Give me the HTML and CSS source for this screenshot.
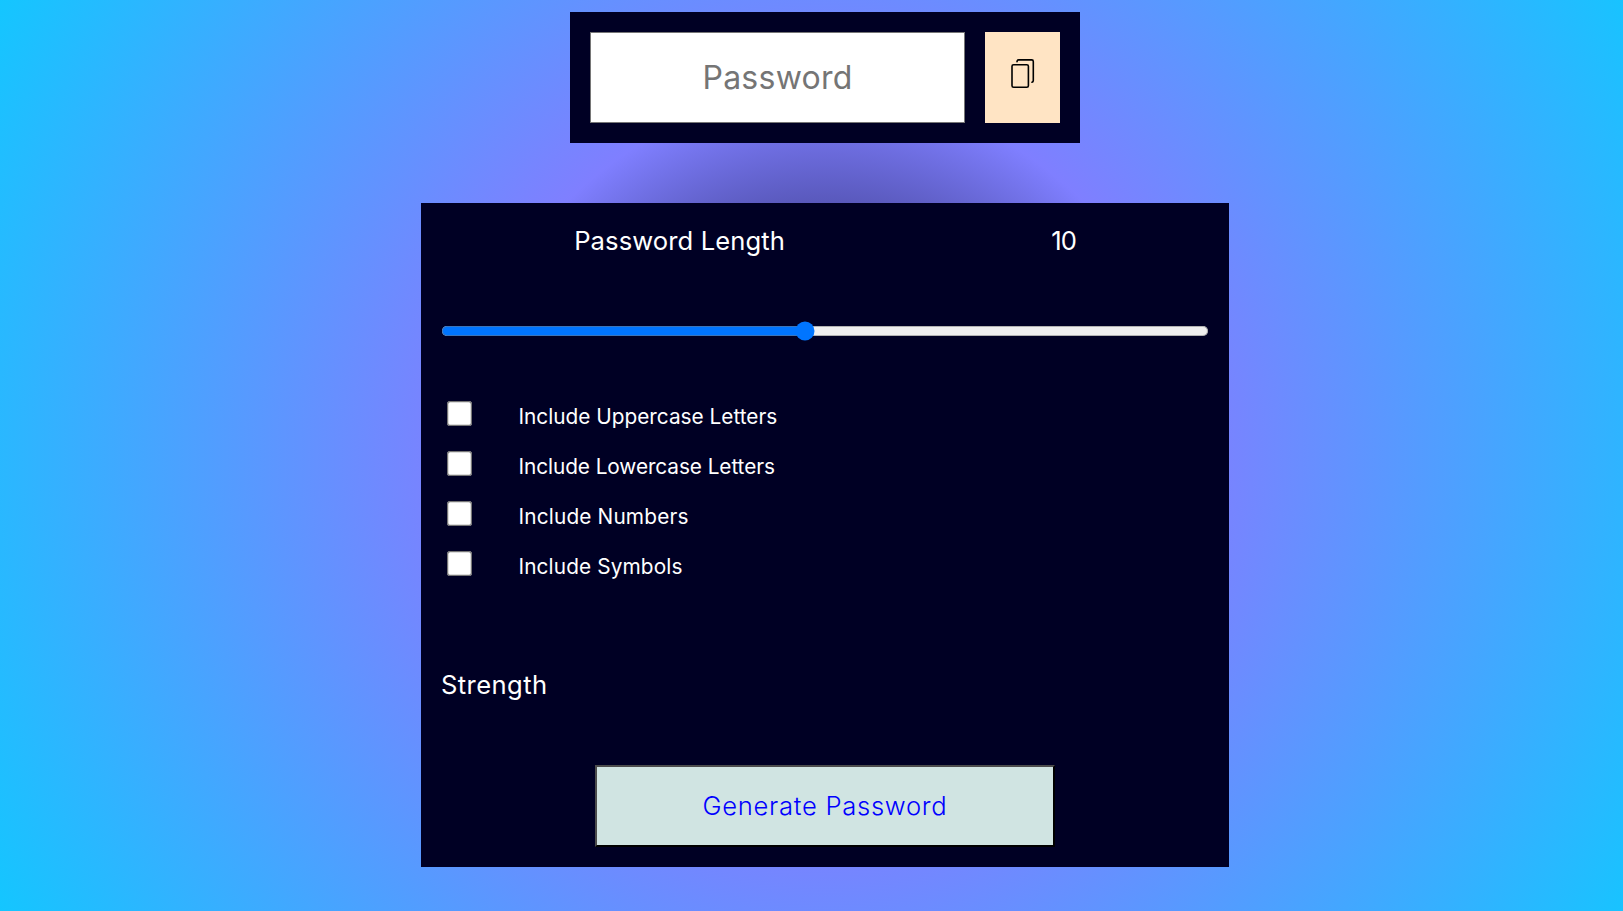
FILE: index.html
```html
<!DOCTYPE html>
<html lang="en">
<head>
<meta charset="utf-8">
<title>Password Generator</title>
<link rel="stylesheet" href="styles.css">
</head>
<body>
<main class="page">
  <section class="display">
    <input class="display-input" type="text" placeholder="Password" readonly>
    <button class="copy" type="button" aria-label="Copy">
      <svg class="copy-icon" viewBox="0 0 24 30" fill="none" stroke="#000" stroke-width="1.6" stroke-linecap="round">
        <rect x="1" y="5.7" width="16.4" height="22.6" rx="1.6"/>
        <path d="M6 2.6Q6.1 0.9 7.6 0.9H20.7Q22.3 0.9 22.3 2.5V21.6Q22.3 23 21 23.3"/>
      </svg>
    </button>
  </section>
  <section class="panel">
    <div class="length-row"><span class="length-label">Password Length</span><span class="length-value">10</span></div>
    <input class="slider" type="range" min="1" max="20" value="10">
    <div class="options">
      <label class="option"><input class="check" type="checkbox"><span>Include Uppercase Letters</span></label>
      <label class="option"><input class="check" type="checkbox"><span class="text-lower">Include Lowercase Letters</span></label>
      <label class="option"><input class="check" type="checkbox"><span class="text-numbers">Include Numbers</span></label>
      <label class="option"><input class="check" type="checkbox"><span class="text-symbols">Include Symbols</span></label>
    </div>
    <div class="strength">Strength</div>
    <button class="generate" type="button">Generate Password</button>
  </section>
</main>
</body>
</html>
```
FILE: styles.css
```css
* { box-sizing: border-box; margin: 0; }
html { overflow: hidden; }
body {
  height: 911px;
  font-family: Inter, sans-serif;
  color: #fff;
}
.page {
  display: flex; flex-direction: column; align-items: center; gap: 60px;
  width: 1650px; height: 911px; padding-top: 12px;
  background: radial-gradient(circle, #020020 0%, #7f7fff 38.4%, #14c6ff 100%);
}
.display { display: flex; gap: 20px; width: 510px; height: 131px; padding: 20px; background: #000024; }
.display-input {
  width: 375px; height: 91px; padding: 0; border: 1px solid #767676;
  background: #fff; text-align: center; font: 400 32px Inter, sans-serif; letter-spacing: 0.25px;
}
.display-input::placeholder { color: #757575; opacity: 1; }
.copy { display: flex; justify-content: center; width: 75px; height: 91px; padding: 27px 0 0; border: 0; background: bisque; }
.copy-icon { width: 24px; height: 30px; }
.panel { display: flex; flex-direction: column; width: 808px; height: 664px; padding: 20px; background: #000024; }
.length-row { display: flex; justify-content: space-around; height: 38px; font-size: 25.6px; line-height: 35px; }
.length-label { letter-spacing: 0.1px; }
.length-value { letter-spacing: -1px; }
.slider { zoom: 1.25; width: 614.4px; height: 16px; margin: 48px 0 0; accent-color: #0075ff; }
.options { margin-top: 49px; }
.option { display: flex; height: 50px; font-size: 20.8px; }
.check { zoom: 1.25; width: 20px; height: 20px; margin: 8.8px 37.2px 0 4.8px; }
.option span { line-height: 50px; padding-top: 2px; }
.option .text-lower { letter-spacing: -0.08px; }
.option .text-numbers { letter-spacing: 0.16px; }
.option .text-symbols { letter-spacing: 0.12px; }
.strength { margin-top: 76px; height: 38px; line-height: 37px; font-size: 25.6px; letter-spacing: 0.4px; }
.generate {
  align-self: center; width: 460px; height: 82px; margin-top: 61px; padding: 0 0 2px;
  border: 2px solid; border-color: #4c4c4c #000 #000 #4c4c4c;
  background: #d0e4e2; color: #00f; font: 300 25.6px Inter, sans-serif; letter-spacing: 0.72px;
}
```
